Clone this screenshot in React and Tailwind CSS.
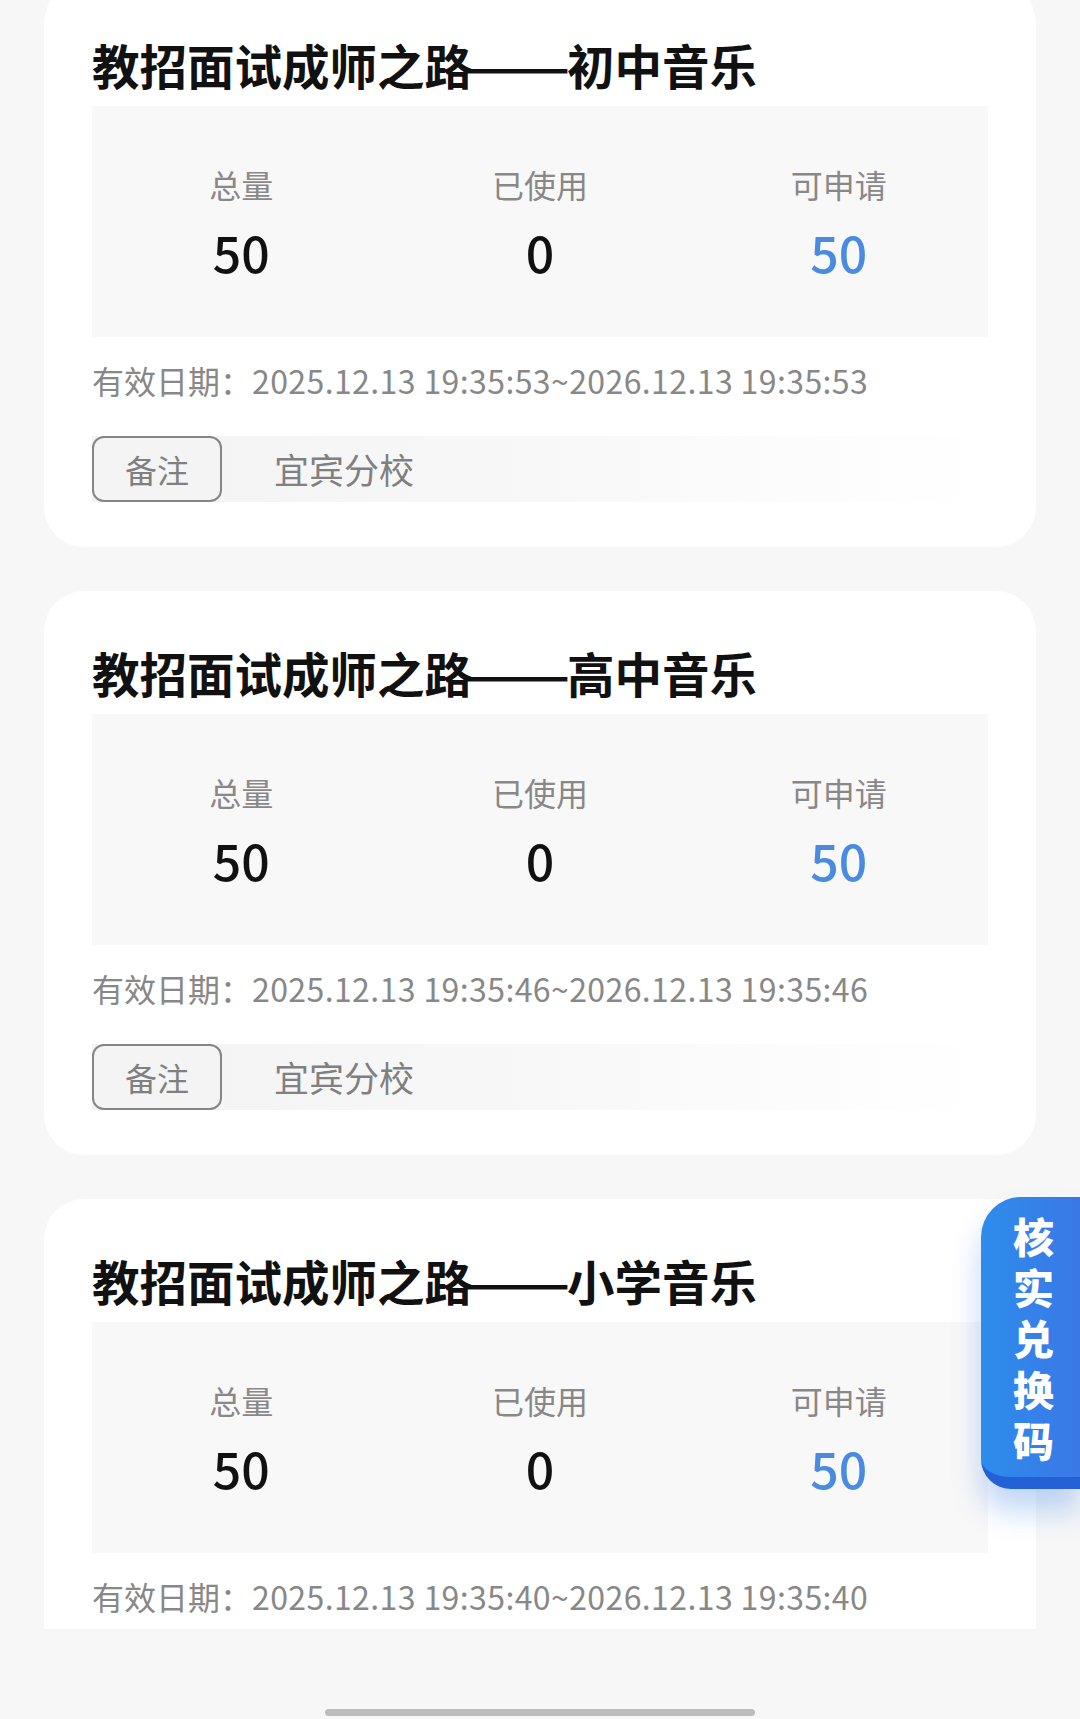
import React from 'react'

const cards = [
  { head: '教招面试成师之路', tail: '初中音乐', total: 50, used: 0, left: 50, range: '2025.12.13 19:35:53~2026.12.13 19:35:53', note: '宜宾分校' },
  { head: '教招面试成师之路', tail: '高中音乐', total: 50, used: 0, left: 50, range: '2025.12.13 19:35:46~2026.12.13 19:35:46', note: '宜宾分校' },
  { head: '教招面试成师之路', tail: '小学音乐', total: 50, used: 0, left: 50, range: '2025.12.13 19:35:40~2026.12.13 19:35:40', note: '宜宾分校' },
]

function Stat({ label, value, blue }) {
  return (
    <div className="flex flex-col items-center pt-[58px]">
      <div className="text-[32px] leading-[40px] text-[#888888]">{label}</div>
      <div className={`mt-[19px] text-[50px] leading-[56px] font-medium ${blue ? 'text-[#4a8ae0]' : 'text-[#111111]'}`}>
        {value}
      </div>
    </div>
  )
}

function Card({ card }) {
  return (
    <div className="bg-white rounded-[40px] px-[48px] pt-[54px] pb-[45px] shrink-0">
      <h2 className="text-[47.5px] leading-[56px] font-bold text-[#111111] whitespace-nowrap">
        {card.head}
        <span className="inline-block w-[95px] translate-x-[7px] scale-x-[1.32]">——</span>
        {card.tail}
      </h2>
      <div className="mt-[13px] h-[231px] bg-[#f8f8f8] grid grid-cols-3">
        <Stat label="总量" value={card.total} />
        <Stat label="已使用" value={card.used} />
        <Stat label="可申请" value={card.left} blue />
      </div>
      <p className="mt-[23px] text-[32px] leading-[40px] text-[#888888] whitespace-nowrap">
        有效日期：<span className="tracking-[0.4px]">{card.range}</span>
      </p>
      <div className="mt-[36px] h-[66px] flex items-center bg-gradient-to-r from-[#f3f3f3] via-[#f8f8f8] to-white">
        <div className="w-[130px] h-[66px] flex items-center justify-center rounded-[12px] border-[2.5px] border-[#858585] bg-[#f4f4f4] text-[32px] text-[#808080]">
          备注
        </div>
        <span className="ml-[52px] text-[35px] text-[#808080]">{card.note}</span>
      </div>
    </div>
  )
}

export default function App() {
  return (
    <div
      className="relative w-[1080px] h-[1719px] overflow-hidden bg-[#f7f7f7] flex flex-col"
      style={{ fontFamily: '"Noto Sans CJK SC", "Noto Sans", sans-serif' }}
    >
      <div className="h-[1629px] shrink-0 overflow-hidden">
        <div className="mt-[-17px] px-[44px] flex flex-col gap-[44px]">
          {cards.map((c) => (
            <Card key={c.tail} card={c} />
          ))}
        </div>
      </div>

      <div className="flex-1 flex items-end justify-center pb-[3px]">
        <div className="w-[430px] h-[7px] rounded-full bg-[#bdbdbd]" />
      </div>

      {/* floating verify button */}
      <div className="absolute right-0 top-[1197px] w-[99px] h-[292px] rounded-tl-[40px] rounded-bl-[30px] border-b-[12px] border-[#2461d6] bg-gradient-to-r from-[#2d8cec] to-[#3a78e6] shadow-[0_22px_30px_rgba(50,120,230,0.3)] flex flex-col items-center pt-[13px] pl-[6px]">
        {'核实兑换码'.split('').map((ch) => (
          <span key={ch} className="text-[41px] leading-[51px] font-black text-white">{ch}</span>
        ))}
      </div>
    </div>
  )
}
